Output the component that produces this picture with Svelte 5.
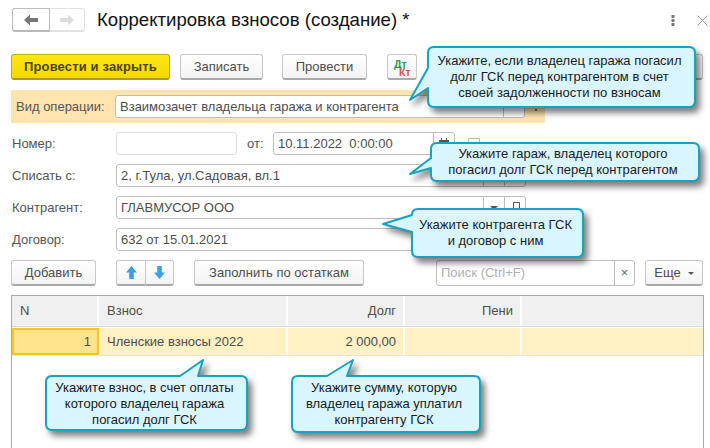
<script>
  const r = 6;
  function path(c) {
    const { x0, y0, x1, y1, tail } = c;
    let p = `M${x0 + r} ${y0}`;
    if (tail.side === 'top') p += `L${tail.a} ${y0}L${tail.tx} ${tail.ty}L${tail.b} ${y0}`;
    p += `L${x1 - r} ${y0}Q${x1} ${y0} ${x1} ${y0 + r}L${x1} ${y1 - r}Q${x1} ${y1} ${x1 - r} ${y1}L${x0 + r} ${y1}Q${x0} ${y1} ${x0} ${y1 - r}`;
    if (tail.side === 'left') p += `L${x0} ${tail.b}L${tail.tx} ${tail.ty}L${x0} ${tail.a}`;
    p += `L${x0} ${y0 + r}Q${x0} ${y0} ${x0 + r} ${y0}Z`;
    return p;
  }
  const callouts = [
    { x0: 428, y0: 47, x1: 695, y1: 107, dy: 0, tail: { side: 'left', a: 68, b: 88, tx: 410, ty: 100 },
      lines: ['Укажите, если владелец гаража погасил', 'долг ГСК перед контрагентом в счет', 'своей задолженности по взносам'] },
    { x0: 431, y0: 143, x1: 699, y1: 181, dy: 0, tail: { side: 'left', a: 158, b: 168, tx: 410, ty: 174 },
      lines: ['Укажите гараж, владелец которого', 'погасил долг ГСК перед контрагентом'] },
    { x0: 412, y0: 209, x1: 583, y1: 257, dy: 0, tail: { side: 'left', a: 215, b: 232, tx: 383, ty: 224 },
      lines: ['Укажите контрагента ГСК', 'и договор с ним'] },
    { x0: 46, y0: 376, x1: 247, y1: 430, dy: 1, tail: { side: 'top', a: 180, b: 198, tx: 203, ty: 360 },
      lines: ['Укажите взнос, в счет оплаты', 'которого владелец гаража', 'погасил долг ГСК'] },
    { x0: 292, y0: 376, x1: 480, y1: 432, dy: 0, tail: { side: 'top', a: 327, b: 347, tx: 353, ty: 360 },
      lines: ['Укажите сумму, которую', 'владелец гаража уплатил', 'контрагенту ГСК'] }
  ];
</script>

<div class="page">
  <header class="head">
    <div class="nav">
      <button class="nav-btn on" aria-label="Назад">
        <svg width="14" height="12" viewBox="0 0 14 12"><path d="M0 6 6 .5V4h8v4H6v3.5z" fill="#777" /></svg>
      </button>
      <button class="nav-btn" aria-label="Вперед">
        <svg width="14" height="12" viewBox="0 0 14 12"><path d="M14 6 8 .5V4H0v4h8v3.5z" fill="#ddd" /></svg>
      </button>
    </div>
    <h1>Корректировка взносов (создание) *</h1>
    <div class="win">
      <svg width="4" height="11" viewBox="0 0 4 11"><path d="M.5 0h3v3h-3zM.5 4h3v3h-3zM.5 8h3v3h-3z" fill="#777" /></svg>
      <svg width="11" height="11" viewBox="0 0 11 11"><path d="M.5.5l10 10M10.500.5l-10 10" stroke="#999" fill="none" /></svg>
    </div>
  </header>

  <div class="bar">
    <button class="btn primary">Провести и закрыть</button>
    <button class="btn w83 ml10">Записать</button>
    <button class="btn w85 ml19">Провести</button>
    <button class="btn dtkt ml20"><span class="dt">Дт</span><span class="kt">Кт</span></button>
    <button class="btn more" aria-label="Еще"></button>
  </div>

  <div class="band">
    <span class="lbl band-lbl">Вид операции:</span>
    <div class="field wide">
      <span class="val">Взаимозачет владельца гаража и контрагента</span>
      <span class="seg s21"></span>
    </div>
    <svg class="dots" width="2" height="8" viewBox="0 0 2 8"><path d="M0 0h2v2H0zM0 3h2v2H0zM0 6h2v2H0z" fill="#3a7fb0" /></svg>
  </div>

  <div class="row first">
    <span class="lbl">Номер:</span>
    <div class="field num"></div>
    <span class="lbl ot">от:</span>
    <div class="field date">
      <span class="val">10.11.2022  0:00:00</span>
      <span class="seg s21">
        <svg width="12" height="12" viewBox="0 0 12 12"><path d="M1 2h10v9H1z" fill="#555" /><path d="M3 0h1v3H3zM8 0h1v3H8z" fill="#555" /><path d="M2 5h8v5H2z" fill="#fff" /></svg>
      </span>
    </div>
    <span class="check"></span>
  </div>

  <div class="row">
    <span class="lbl">Списать с:</span>
    <div class="field wide">
      <span class="val">2, г.Тула, ул.Садовая, вл.1</span>
      <span class="seg s21"></span><span class="seg s21"></span>
    </div>
  </div>

  <div class="row">
    <span class="lbl">Контрагент:</span>
    <div class="field wide">
      <span class="val">ГЛАВМУСОР ООО</span>
      <span class="seg s21"><i class="tri"></i></span>
      <span class="seg s21">
        <svg width="11" height="11" viewBox="0 0 11 11"><path d="M3.500 6.500v-6h6v6h-3M.5 6.500h4v4h-4z" fill="none" stroke="#555" /></svg>
      </span>
    </div>
  </div>

  <div class="row">
    <span class="lbl">Договор:</span>
    <div class="field wide"><span class="val">632 от 15.01.2021</span></div>
  </div>

  <div class="tools">
    <button class="btn add">Добавить</button>
    <div class="pair">
      <button class="btn arrow" aria-label="Вверх">
        <svg width="11" height="13" viewBox="0 0 12 14"><path d="M6 0l6 7H8.500v7h-5V7H0z" fill="#3d9ee0" /></svg>
      </button>
      <button class="btn arrow" aria-label="Вниз">
        <svg width="11" height="13" viewBox="0 0 12 14"><path d="M6 14l6-7H8.500V0h-5v7H0z" fill="#3d9ee0" /></svg>
      </button>
    </div>
    <button class="btn fill">Заполнить по остаткам</button>
    <div class="search">
      <span class="ph">Поиск (Ctrl+F)</span>
      <span class="clear">×</span>
    </div>
    <button class="btn esche">Еще<i class="tri small"></i></button>
  </div>

  <div class="table">
    <div class="tr thead">
      <div class="c c1">N</div>
      <div class="c c2">Взнос</div>
      <div class="c c3 right">Долг</div>
      <div class="c c4 right">Пени</div>
      <div class="c c5"></div>
    </div>
    <div class="tr tbody">
      <div class="c c1 right cur">1</div>
      <div class="c c2">Членские взносы 2022</div>
      <div class="c c3 right">2 000,00</div>
      <div class="c c4"></div>
      <div class="c c5"></div>
    </div>
  </div>

  <svg class="overlay" width="710" height="448" viewBox="0 0 710 448">
    {#each callouts as c}
      <path class="bubble" d={path(c)} />
    {/each}
  </svg>
  {#each callouts as c}
    <div class="note" style="left:{c.x0}px;top:{c.y0 + c.dy}px;width:{c.x1 - c.x0}px;height:{c.y1 - c.y0}px">
      {#each c.lines as l}<div>{l}</div>{/each}
    </div>
  {/each}
</div>

<style>
  :global(body) { margin: 0; background: #fff; }
  .page {
    position: relative;
    width: 710px;
    height: 448px;
    overflow: hidden;
    background: #fff;
    font: 13px/16px "Liberation Sans", Arial, sans-serif;
    color: #4d4d4d;
  }
  button { font: inherit; color: inherit; padding: 0; margin: 0; }

  .head { display: flex; align-items: center; height: 24px; padding: 8px 0 0 12px; }
  .nav { display: flex; width: 73px; height: 24px; box-sizing: border-box; border-radius: 3px; }
  .nav-btn {
    flex: 1; display: flex; align-items: center; justify-content: center;
    background: #fff; border: 1px solid #e2e2e2; border-bottom-width: 2px; box-sizing: border-box;
  }
  .nav-btn.on { flex: 0 0 38px; border-color: #bbb; border-radius: 3px 0 0 3px; }
  .nav-btn:last-child { border-left: 0; border-radius: 0 3px 3px 0; }
  h1 { margin: 0 0 0 12px; font-size: 18.6px; font-weight: 400; line-height: 24px; color: #111; white-space: nowrap; }
  .win { margin-left: auto; display: flex; align-items: center; gap: 22px; padding-right: 2px; }

  .bar { display: flex; height: 26px; margin: 22px 7px 0 11px; }
  .btn {
    display: flex; align-items: center; justify-content: center; height: 26px; box-sizing: border-box;
    background: linear-gradient(#fff, #f3f3f3); border: 1px solid #c8c8c8; border-bottom: 2px solid #a9a9a9;
    border-radius: 3px; white-space: nowrap;
  }
  .primary {
    width: 159px; font-weight: 700; color: #4d4400; letter-spacing: 0.15px;
    background: linear-gradient(#ffe714, #f5d800); border: 1px solid #c4aa10; border-bottom: 2px solid #b09a10;
  }
  .w83 { width: 83px; }
  .w85 { width: 85px; }
  .ml10 { margin-left: 10px; }
  .ml19 { margin-left: 19px; }
  .ml20 { margin-left: 20px; }
  .dtkt { position: relative; width: 30px; font-size: 10.5px; line-height: 8px; font-weight: 700; display: block; }
  .dt { position: absolute; left: 6px; top: 5px; color: #2a9a4a; }
  .kt { position: absolute; left: 11px; top: 13px; color: #e05050; }
  .more { margin-left: auto; width: 80px; }

  .band { display: flex; align-items: center; width: 534px; height: 33px; margin: 10px 0 0 11px; background: #ffe4b0; position: relative; }
  .band-lbl { width: 105px; padding-left: 5px; box-sizing: border-box; }
  .dots { position: absolute; left: 524px; top: 13px; }

  .row { display: flex; align-items: center; height: 23px; margin: 9px 0 0 12px; }
  .lbl { flex: 0 0 auto; width: 104px; white-space: nowrap; color: #555; }
  .field {
    display: flex; align-items: center; height: 23px; box-sizing: border-box;
    background: #fff; border: 1px solid #bdbdbd; border-radius: 3px; white-space: pre;
  }
  .wide { width: 410px; }
  .num { width: 121px; border-color: #ddd; }
  .ot { width: 26px; margin-left: 10px; }
  .date { width: 182px; }
  .val { flex: 1; padding-left: 4px; overflow: hidden; }
  .seg { flex: 0 0 21px; height: 100%; box-sizing: border-box; border-left: 1px solid #bdbdbd; display: flex; align-items: center; justify-content: center; }
  .check { width: 12px; height: 12px; margin: 0 0 0 13px; border: 1px solid #bbb; box-sizing: border-box; border-radius: 1px; }
  .tri { display: block; width: 0; height: 0; border: 4px solid transparent; border-top-color: #555; border-bottom: 0; }
  .tri.small { border-width: 3px; border-bottom: 0; margin-left: 7px; margin-top: 2px; }

  .tools { display: flex; height: 26px; margin: 9px 7px 0 11px; }
  .add { width: 85px; }
  .pair { display: flex; margin-left: 20px; }
  .arrow { width: 29px; border-radius: 0; }
  .arrow:first-child { border-radius: 3px 0 0 3px; border-right: 0; }
  .arrow:last-child { border-radius: 0 3px 3px 0; }
  .fill { width: 170px; margin-left: 20px; }
  .search {
    display: flex; align-items: center; justify-content: space-between; width: 199px; height: 26px; box-sizing: border-box;
    margin-left: 72px; border: 1px solid #bdbdbd; border-radius: 3px; background: #fff;
  }
  .ph { padding-left: 4px; color: #b0b0b0; }
  .clear { width: 20px; height: 100%; box-sizing: border-box; border-left: 1px solid #bdbdbd; display: flex; align-items: center; justify-content: center; color: #666; }
  .esche { width: 58px; margin-left: auto; }

  .table { width: 693px; height: 160px; box-sizing: border-box; margin: 9px 0 0 11px; border: 1px solid #aaa; border-bottom: 0; }
  .tr { display: flex; box-sizing: border-box; }
  .thead { height: 31px; background: #f0f0f0; border-bottom: 1px solid #d8d8d8; }
  .tbody { height: 28px; margin-top: 1px; background: #fff1c4; border-bottom: 1px solid #e4e4e4; }
  .c { box-sizing: border-box; padding: 0 8px; display: flex; align-items: center; border-right: 2px solid #fff; }
  .thead .c { padding-bottom: 1px; }
  .right { justify-content: flex-end; }
  .c1 { width: 87px; }
  .c2 { width: 189px; }
  .c3 { width: 117px; }
  .c4 { width: 117px; }
  .c5 { flex: 1; border-right: 0; }
  .c3.right, .c4.right { padding-right: 7px; }
  .cur { background: #ffe28c; border: 2px solid #f8c61e; padding-right: 6px; }

  .overlay { position: absolute; left: 0; top: 0; pointer-events: none; }
  .bubble {
    fill: #d9f6ff; stroke: #17a2c2; stroke-width: 2; stroke-linejoin: round;
    filter: drop-shadow(4px 5px 3px rgba(0, 0, 0, 0.5));
  }
  .note {
    position: absolute; display: flex; flex-direction: column; align-items: center; justify-content: center;
    box-sizing: border-box; padding-right: 4px;
    color: #1a1a1a; white-space: nowrap;
  }
</style>
